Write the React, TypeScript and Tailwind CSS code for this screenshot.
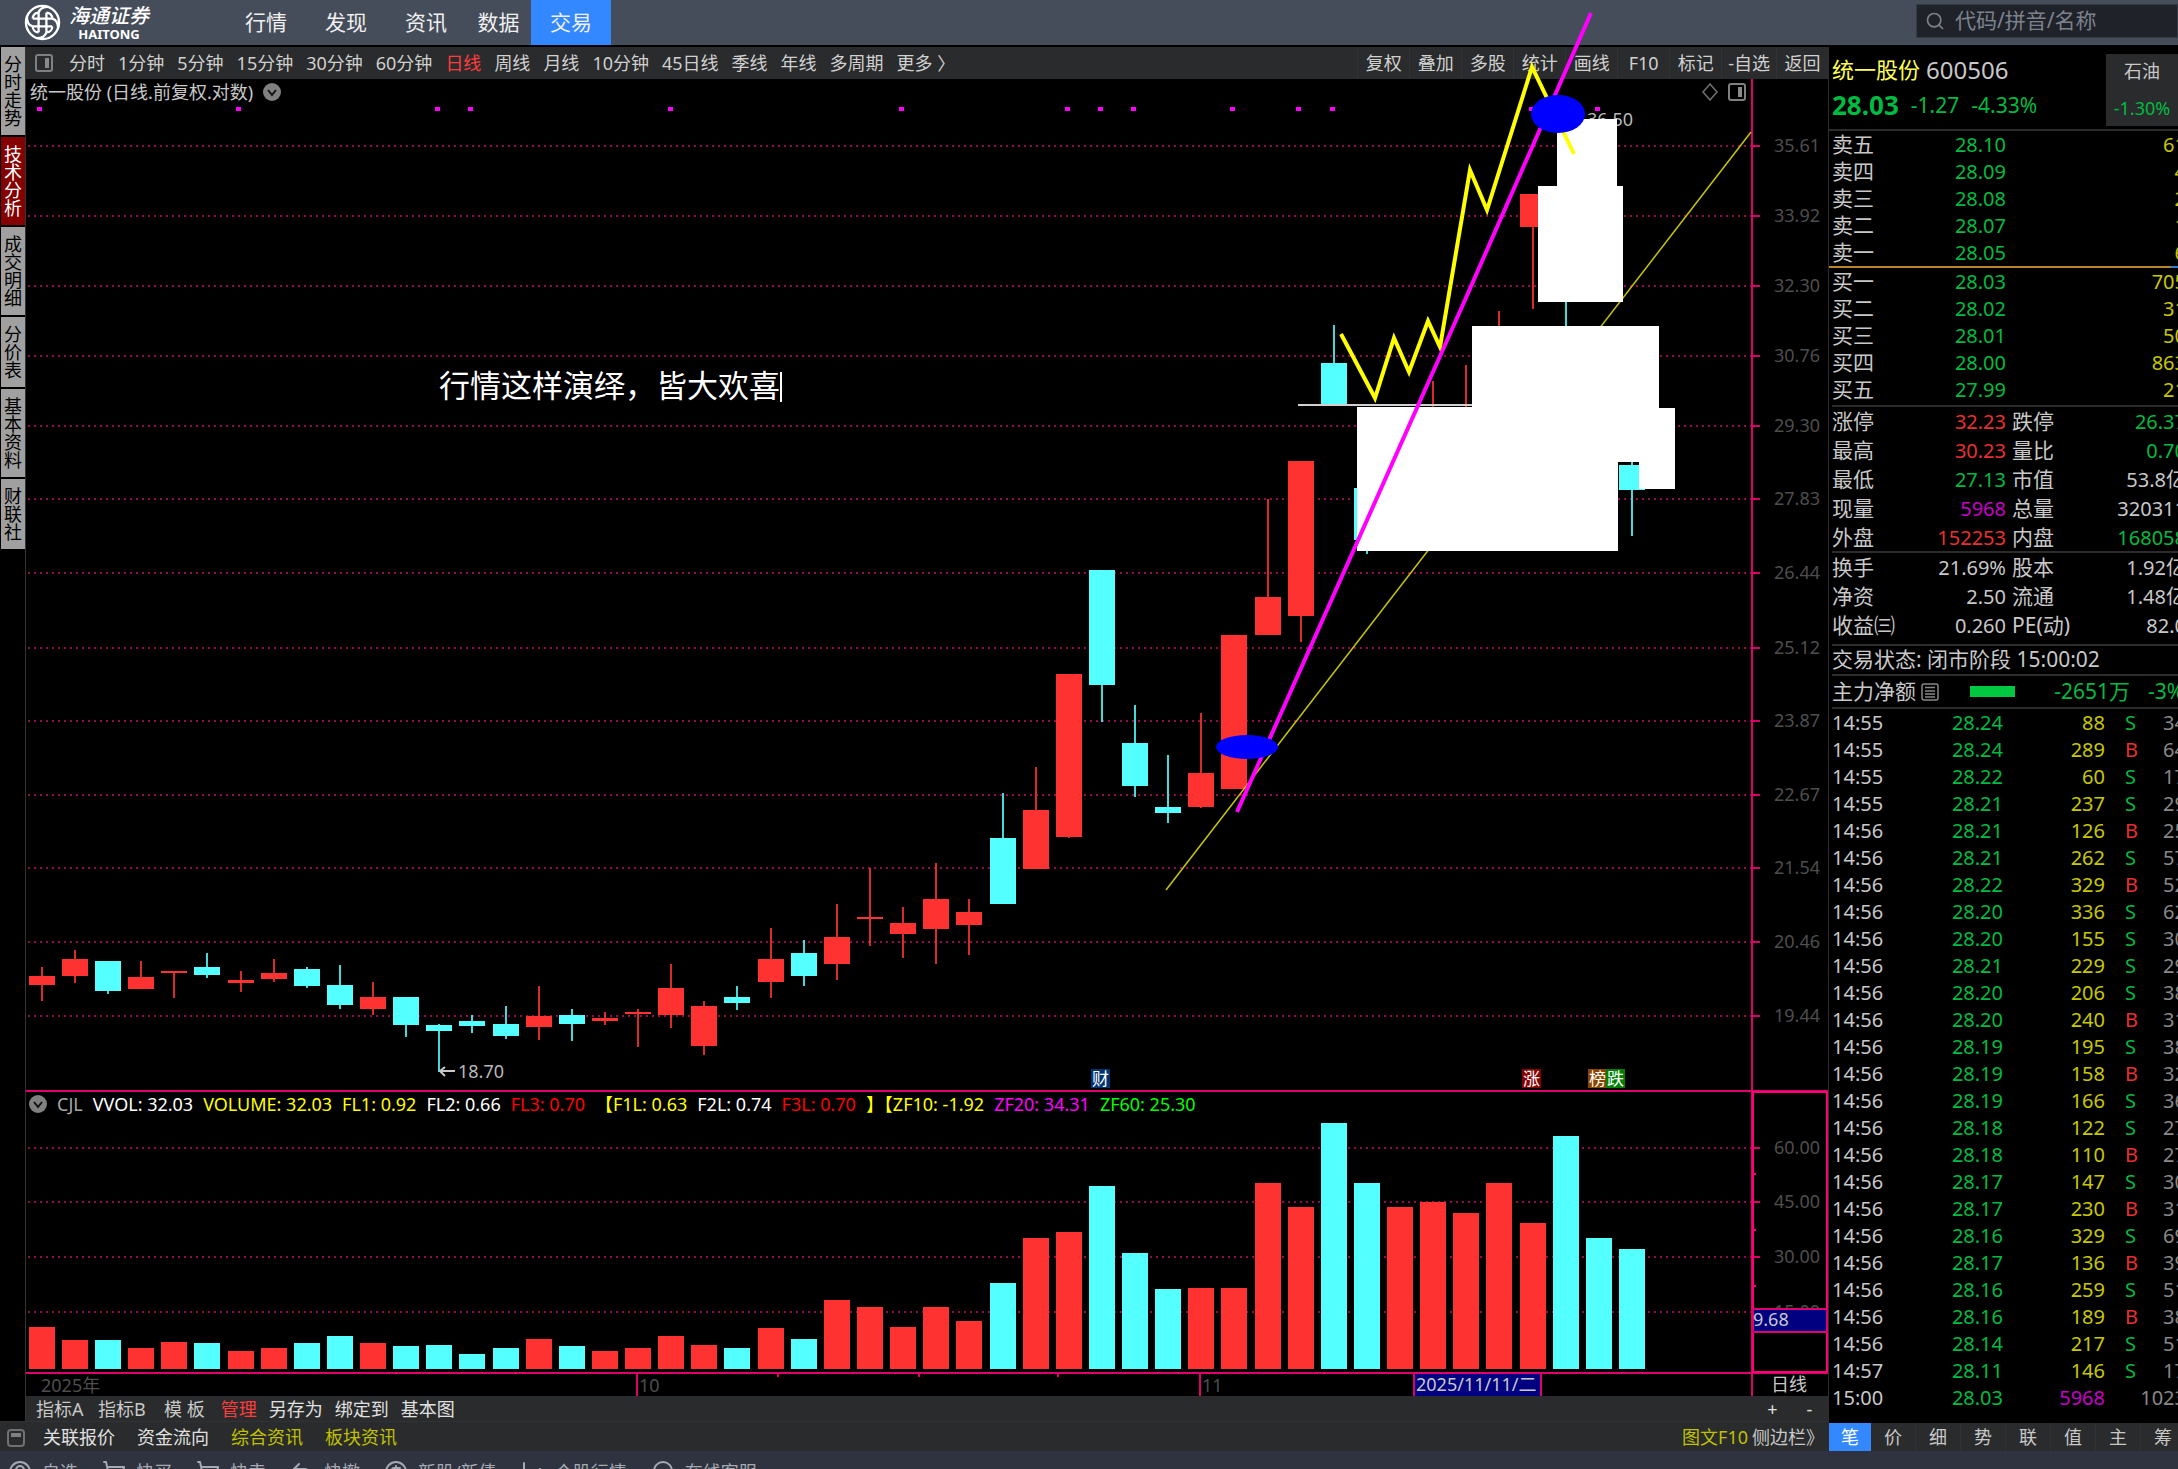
import React from "react";
import { Search, ShoppingCart, Undo2, ChartLine, Headset, CircleUserRound, CircleDollarSign } from "lucide-react";

// Daily candlestick terminal: toolbar + chart on the left, order book and ticks on the right.

type Candle = { up: boolean; high: number; top: number; bottom: number; low: number; vol: number };

const c = (dir: "r" | "c", high: number, top: number, bottom: number, low: number, vol: number): Candle => ({
  up: dir === "r", high, top, bottom, low, vol,
});

const CANDLES: Candle[] = [
  c("r", 967, 976, 985, 1001, 1327), c("r", 950, 959, 976, 983, 1340), c("c", 961, 961, 991, 994, 1340),
  c("r", 961, 977, 989, 989, 1348), c("r", 971, 971, 973, 998, 1342), c("c", 953, 967, 975, 978, 1343),
  c("r", 971, 980, 983, 992, 1351), c("r", 959, 973, 979, 982, 1348), c("c", 967, 969, 986, 988, 1343),
  c("c", 965, 985, 1005, 1009, 1336), c("r", 982, 997, 1009, 1015, 1343), c("c", 997, 997, 1025, 1037, 1346),
  c("c", 1024, 1025, 1031, 1072, 1345), c("c", 1015, 1021, 1026, 1033, 1354), c("c", 1006, 1024, 1036, 1039, 1348),
  c("r", 986, 1016, 1027, 1040, 1339), c("c", 1009, 1015, 1024, 1041, 1346), c("r", 1012, 1018, 1021, 1025, 1351),
  c("r", 1009, 1012, 1014, 1047, 1348), c("r", 964, 988, 1015, 1028, 1336), c("r", 1001, 1006, 1046, 1055, 1345),
  c("c", 986, 997, 1003, 1010, 1348), c("r", 928, 959, 982, 998, 1328), c("c", 940, 953, 976, 986, 1339),
  c("r", 904, 937, 964, 980, 1300), c("r", 868, 917, 919, 946, 1307), c("r", 907, 923, 934, 958, 1327),
  c("r", 863, 899, 929, 964, 1307), c("r", 899, 912, 925, 955, 1321), c("c", 793, 838, 904, 904, 1283),
  c("r", 767, 810, 869, 869, 1238), c("r", 674, 674, 837, 838, 1232), c("c", 570, 570, 685, 722, 1186),
  c("c", 705, 743, 786, 797, 1253), c("c", 755, 807, 813, 823, 1289), c("r", 713, 773, 807, 808, 1288),
  c("r", 635, 635, 789, 789, 1288), c("r", 499, 597, 635, 635, 1183), c("r", 461, 461, 616, 642, 1207),
  c("c", 325, 363, 405, 405, 1123), c("c", 488, 488, 540, 554, 1183), c("r", 420, 430, 500, 510, 1207),
  c("r", 381, 420, 480, 500, 1202), c("r", 365, 420, 480, 500, 1213), c("r", 311, 340, 400, 420, 1183),
  c("r", 194, 194, 227, 309, 1223), c("c", 195, 200, 300, 340, 1136), c("c", 340, 350, 400, 400, 1238),
  c("c", 460, 465, 490, 536, 1249),
];

const PRICES: [string, number][] = [
  ["35.61", 146], ["33.92", 216], ["32.30", 286], ["30.76", 356], ["29.30", 426], ["27.83", 499], ["26.44", 573],
  ["25.12", 648], ["23.87", 721], ["22.67", 795], ["21.54", 868], ["20.46", 942], ["19.44", 1016],
];
const VOLUMES: [string, number][] = [["60.00", 1148], ["45.00", 1202], ["30.00", 1257], ["15.00", 1312]];
const SIGNALS = [39, 238, 437, 470, 670, 901, 1067, 1100, 1133, 1232, 1298, 1332, 1531, 1597];

const BADGES = [
  { x: 1091, label: "财", fill: "#003370" },
  { x: 1522, label: "涨", fill: "#850000" },
  { x: 1588, label: "榜", fill: "#8a4500" },
  { x: 1606, label: "跌", fill: "#008000" },
];

const NAV = ["行情", "发现", "资讯", "数据", "交易"];
const SIDE = ["分时走势", "技术分析", "成交明细", "分价表", "基本资料", "财联社"];
const PERIODS = ["分时", "1分钟", "5分钟", "15分钟", "30分钟", "60分钟", "日线", "周线", "月线", "10分钟", "45日线", "季线", "年线", "多周期", "更多 〉"];
const TOOLS = ["复权", "叠加", "多股", "统计", "画线", "F10", "标记", "-自选", "返回"];

const LEGEND: [string, string][] = [
  ["CJL", "text-[#a8a8a8]"], ["VVOL: 32.03", "text-white"], ["VOLUME: 32.03", "text-[#ffff00]"],
  ["FL1: 0.92", "text-[#ffff00]"], ["FL2: 0.66", "text-white"], ["FL3: 0.70", "text-[#ff0000]"],
  ["【F1L: 0.63", "text-[#ffff00]"], ["F2L: 0.74", "text-white"], ["F3L: 0.70", "text-[#ff0000]"],
  ["】【ZF10: -1.92", "text-[#ffff00]"], ["ZF20: 34.31", "text-[#ff00ff]"], ["ZF60: 25.30", "text-[#00ff00]"],
];

const ASKS = [["卖五", "28.10", "61"], ["卖四", "28.09", "4"], ["卖三", "28.08", "2"], ["卖二", "28.07", "1"], ["卖一", "28.05", "6"]];
const BIDS = [["买一", "28.03", "705"], ["买二", "28.02", "31"], ["买三", "28.01", "50"], ["买四", "28.00", "863"], ["买五", "27.99", "21"]];

const RED = "text-[#e83030]";
const GREEN = "text-[#00bb42]";
const GRAY = "text-[#c8c8c8]";
const PURPLE = "text-[#c800c8]";

const STATS = [
  ["涨停", "32.23", RED, "跌停", "26.37", GREEN],
  ["最高", "30.23", RED, "量比", "0.70", GREEN],
  ["最低", "27.13", GREEN, "市值", "53.8亿", GRAY],
  ["现量", "5968", PURPLE, "总量", "320311", GRAY],
  ["外盘", "152253", RED, "内盘", "168058", GREEN],
];
const FUNDAMENTALS = [
  ["换手", "21.69%", GRAY, "股本", "1.92亿", GRAY],
  ["净资", "2.50", GRAY, "流通", "1.48亿", GRAY],
  ["收益㈢", "0.260", GRAY, "PE(动)", "82.0", GRAY],
];

const TICKS = `14:55 28.24 88 S 34
14:55 28.24 289 B 64
14:55 28.22 60 S 17
14:55 28.21 237 S 29
14:56 28.21 126 B 25
14:56 28.21 262 S 57
14:56 28.22 329 B 52
14:56 28.20 336 S 62
14:56 28.20 155 S 30
14:56 28.21 229 S 29
14:56 28.20 206 S 38
14:56 28.20 240 B 31
14:56 28.19 195 S 38
14:56 28.19 158 B 32
14:56 28.19 166 S 36
14:56 28.18 122 S 27
14:56 28.18 110 B 27
14:56 28.17 147 S 30
14:56 28.17 230 B 31
14:56 28.16 329 S 69
14:56 28.17 136 B 39
14:56 28.16 259 S 51
14:56 28.16 189 B 38
14:56 28.14 217 S 51
14:57 28.11 146 S 17
15:00 28.03 5968 - 1023`.split("\n").map((l) => l.split(" "));

const cx = (i: number) => Math.round(41.75 + i * 33.13);

function PanelIcon({ className }: { className?: string }) {
  return (
    <svg viewBox="0 0 18 18" className={`w-[18px] h-[18px] shrink-0 ${className ?? ""}`}>
      <rect x="1" y="1" width="16" height="16" rx="2" fill="none" stroke="#808080" strokeWidth="2" />
      <rect x="10" y="4" width="4" height="10" fill="#8a8a8a" />
    </svg>
  );
}

function Dropdown({ label }: { label: string }) {
  return (
    <button aria-label={label} className="shrink-0">
      <svg viewBox="0 0 18 18" className="w-[18px] h-[18px]">
        <circle cx="9" cy="9" r="9" fill="#808080" />
        <path d="M5 7l4 5 4-5" fill="none" stroke="#111" strokeWidth="2" />
      </svg>
    </button>
  );
}

function Header() {
  return (
    <header className="flex items-center h-[47px] shrink-0 bg-[#454c5a] border-b-2 border-black">
      <div className="flex items-center w-[226px] pl-6 gap-2 text-white">
        <svg viewBox="0 0 38 38" className="w-[37px] h-[37px]" fill="none" stroke="#fff">
          <circle cx="19" cy="19" r="17" strokeWidth="2.4" />
          <path d="M15 9v20M23 9v20M9 15h20M9 23h20" strokeWidth="2.4" />
          <path d="M15 9c1-4 5-6 10-6M29 15c4 1 6 5 6 10M23 29c-1 4-5 6-10 6M9 23c-4-1-6-5-6-10" strokeWidth="2.4" />
          <path d="M23 9c3 0 6 2 6 6M29 23c0 3-2 6-6 6M15 29c-3 0-6-2-6-6M9 15c0-3 2-6 6-6" strokeWidth="2.4" />
        </svg>
        <div className="flex flex-col items-center">
          <span className="text-[20px] leading-[22px] font-medium italic">海通证券</span>
          <span className="text-[13px] leading-[14px] font-bold">HAITONG</span>
        </div>
      </div>
      <nav className="flex h-full">
        {NAV.map((n) => (
          <button
            key={n}
            className={`h-full text-[21px] text-[#f0f0f0] ${n === "数据" ? "w-[65px]" : "w-20"} ${n === "交易" ? "bg-[#3388ff]" : ""}`}
          >
            {n}
          </button>
        ))}
      </nav>
      <label className="flex items-center gap-[10px] ml-auto w-[262px] h-[34px] -mt-1 pl-2 bg-[#1f2229] border border-[#363b46]">
        <Search className="w-5 h-5 shrink-0 text-[#7c828d]" strokeWidth={2} />
        <input
          aria-label="搜索" placeholder="代码/拼音/名称"
          className="min-w-0 flex-1 bg-transparent text-[21px] outline-none placeholder:text-[#7c828d]"
        />
      </label>
    </header>
  );
}

function Chart() {
  return (
    <div className="relative">
      <svg
        viewBox="26 79 1802 1317"
        className="relative z-10 block w-full h-auto overflow-visible pointer-events-none text-[18px]"
      >
        {/* grid and axis labels */}
        {[...PRICES, ...VOLUMES].map(([label, y]) => (
          <g key={label}>
            <line x1="28" x2="1752" y1={y} y2={y} stroke="#98084e" strokeWidth="2" strokeDasharray="2 4" shapeRendering="crispEdges" />
            <line x1="1752" x2="1760" y1={y} y2={y} stroke="#d80068" strokeWidth="2" />
            <text x="1820" y={y + 6} textAnchor="end" fill="#4e4e4e">{label}</text>
          </g>
        ))}
        {[1174, 1230, 1286].map((y) => <line key={y} x1="1752" x2="1756" y1={y} y2={y} stroke="#ff0078" strokeWidth="2" />)}
        {SIGNALS.map((x) => <rect key={x} x={x - 2} y="107" width="5" height="4" fill="#ff00ff" />)}

        {/* candles with their volume bars */}
        <g shapeRendering="crispEdges">
          {CANDLES.map((k, i) => (
            <g key={i} fill={k.up ? "#ff3232" : "#54ffff"}>
              <rect x={cx(i) - 1} y={k.high} width="2" height={k.low - k.high} opacity="0.85" />
              <rect x={cx(i) - 13} y={k.top} width="26" height={k.bottom - k.top} />
              <rect x={cx(i) - 13} y={k.vol} width="26" height={1369 - k.vol} />
            </g>
          ))}
        </g>

        <path d="M455 1071h-15m5-4l-5 4 5 5" fill="none" stroke="#c8c8c8" strokeWidth="2" />
        <text x="458" y="1078" fill="#b8b8b8">18.70</text>
        <text x="1633" y="126" textAnchor="end" fill="#b8b8b8">36.50</text>

        {BADGES.map((b) => (
          <g key={b.label}>
            <rect x={b.x} y="1069" width="19" height="19" fill={b.fill} />
            <text x={b.x + 1} y="1085" fill="#fff" className="text-[17px]">{b.label}</text>
          </g>
        ))}

        {/* frames */}
        <g stroke="#e0006c" strokeWidth="2" fill="none">
          <path d="M1752 79V1396M26 1091H1828M26 1373H1828M637 1373v23M1200 1373v23M778 1373v4M919 1373v4M1058 1373v4" />
          <rect x="1753" y="1092" width="74" height="280" stroke="#ff0078" />
          <rect x="1753" y="1309" width="74" height="23" fill="#000080" />
        </g>
        <text x="1753" y="1326" fill="#c8c8c8">9.68</text>
        <rect x="1415" y="1374" width="125" height="22" fill="#000080" />
        <path d="M1414 1374v22M1541 1374v22" stroke="#e0006c" strokeWidth="2" />
        <text x="1416" y="1391" fill="#c8c8c8">2025/11/11/二</text>
        <g fill="#4e4e4e">
          <text x="41" y="1392">2025年</text>
          <text x="639" y="1392">10</text>
          <text x="1202" y="1392">11</text>
        </g>
        <text x="1771" y="1391" fill="#c8c8c8">日线</text>

        {/* hand-drawn layer */}
        <path d="M1166 890L1751 132" stroke="#c8c800" strokeWidth="1.5" />
        <path d="M1298 405H1472" stroke="#d0d0d0" strokeWidth="2" />
        <path
          fill="#fff"
          d="M1557 119H1617V186H1623V302H1538V186H1557ZM1472 326H1659V408H1675V489H1639V462H1618V551H1357V407H1472Z"
        />
        <path
          d="M1341 334L1375 398 1394 338 1409 372 1428 321 1440 347 1470 170 1487 210 1532 67 1574 154"
          fill="none" stroke="#ffff00" strokeWidth="4"
        />
        <path d="M1237 812L1465 300 1591 13" fill="none" stroke="#ff00ff" strokeWidth="4" />
        <ellipse cx="1558" cy="114" rx="27" ry="19" fill="#0000ff" />
        <ellipse cx="1247" cy="747" rx="31" ry="12" fill="#0000ff" />
        <text x="439" y="397" fill="#fff" className="text-[31px]">行情这样演绎，皆大欢喜</text>
        <path d="M781 372V402" stroke="#fff" strokeWidth="2" />
      </svg>

      <div className="absolute left-0 right-0 top-0 flex items-center h-[26px] pl-1 pr-[82px] text-[18px] text-[#c8c8c8]">
        <span>统一股份 (日线.前复权.对数)</span>
        <span className="ml-[10px] flex"><Dropdown label="指标菜单" /></span>
        <svg viewBox="0 0 16 18" className="w-4 h-[18px] ml-auto" fill="none" stroke="#707070" strokeWidth="1.5">
          <path d="M8 1l7 8-7 8-7-8z" />
        </svg>
        <PanelIcon className="ml-[10px]" />
      </div>
      <div className="absolute left-0 top-[77%] flex items-center gap-[10px] h-[22px] pl-[3px] text-[18px] whitespace-nowrap">
        <Dropdown label="副图菜单" />
        {LEGEND.map(([text, color]) => <span key={text} className={color}>{text}</span>)}
      </div>
    </div>
  );
}

function Toolbar() {
  return (
    <div className="flex items-center h-8 pl-[9px] bg-[#292b2c] text-[18px] text-[#d0d0d0] whitespace-nowrap">
      <PanelIcon />
      <div className="flex gap-[13px] ml-4">
        {PERIODS.map((p) => (
          <button key={p} className={p === "日线" ? "text-[#ff3c3c]" : ""}>{p}</button>
        ))}
      </div>
      <div className="flex h-full ml-auto">
        {TOOLS.map((t) => (
          <button key={t} className="min-w-[52px] px-[6px] border-l border-[#303233]">{t}</button>
        ))}
      </div>
    </div>
  );
}

function IndicatorBar() {
  return (
    <div className="flex items-center h-[25px] pt-[2px] pl-[10px] gap-3 bg-[#292b2c] text-[18px] text-[#e0e0e0] whitespace-nowrap">
      <button className="w-[50px] text-left text-[#c8c8c8]">指标A</button>
      <button className="w-[50px] text-left text-[#c8c8c8]">指标B</button>
      <button className="px-1 text-[#c8c8c8]">模 板</button>
      <button className="text-[#ff3c3c]">管理</button>
      <button>另存为</button>
      <button>绑定到</button>
      <button>基本图</button>
      <div className="flex ml-auto">
        <button className="w-[37px]">+</button>
        <button className="w-[37px]">-</button>
      </div>
    </div>
  );
}

function InfoBar() {
  return (
    <div className="flex items-center h-[30px] pt-[2px] pl-[7px] pr-1 gap-[22px] bg-[#292b2c] border-t border-[#303233] text-[18px] text-[#e0e0e0] whitespace-nowrap">
      <svg viewBox="0 0 18 18" className="w-[18px] h-[18px] -mr-1">
        <rect x="1" y="1" width="16" height="16" rx="3" fill="none" stroke="#707070" strokeWidth="2" />
        <rect x="4" y="4" width="10" height="4" fill="#808080" />
      </svg>
      <button>关联报价</button>
      <button>资金流向</button>
      <button className="text-[#c0c000]">综合资讯</button>
      <button className="text-[#c0c000]">板块资讯</button>
      <div className="flex gap-1 ml-auto">
        <button className="text-[#c0c000]">图文F10</button>
        <button className="text-[#c8c8c8]">侧边栏》</button>
      </div>
    </div>
  );
}

function Book({ rows }: { rows: string[][] }) {
  return (
    <div>
      {rows.map(([name, price, qty]) => (
        <div key={name} className="flex items-center h-[27px]">
          <span className="w-[74px] text-[21px]">{name}</span>
          <span className={`w-[100px] text-right ${GREEN}`}>{price}</span>
          <span className="flex-1 text-right text-[#c8c800]">{qty}</span>
        </div>
      ))}
    </div>
  );
}

function Stats({ rows }: { rows: string[][] }) {
  return (
    <div>
      {rows.map(([a, av, ac, b, bv, bc]) => (
        <div key={a} className="flex items-center h-[29px]">
          <span className="w-[74px] text-[21px]">{a}</span>
          <span className={`w-[100px] text-right ${ac}`}>{av}</span>
          <span className="w-[72px] pl-[6px] text-[21px]">{b}</span>
          <span className={`flex-1 text-right ${bc}`}>{bv}</span>
        </div>
      ))}
    </div>
  );
}

function QuotePanel() {
  return (
    <aside className="flex flex-col w-[350px] shrink-0 overflow-hidden border-l border-[#2c2c2c] text-[20px] leading-[27px] text-[#c8c8c8] whitespace-nowrap">
      <div className="flex h-[84px] border-b-2 border-[#2c2c2c] pl-[3px]">
        <div className="flex-1 pt-2">
          <div className="flex items-center gap-[6px] h-7">
            <span className="text-[22px] text-[#ffff55]">统一股份</span>
            <span className="text-[24px]">600506</span>
          </div>
          <div className={`flex items-center gap-3 h-11 text-[21px] ${GREEN}`}>
            <b className="text-[26px]">28.03</b>
            <span>-1.27</span>
            <span>-4.33%</span>
          </div>
        </div>
        <div className="flex flex-col items-center w-[72px] h-[72px] mt-[7px] pt-1 gap-[10px] bg-[#292b2c] text-[18px]">
          <span>石油</span>
          <span className={GREEN}>-1.30%</span>
        </div>
      </div>

      {/* wider than the panel, the last column runs off the edge */}
      <div className="w-[357px] pl-[3px]">
        <Book rows={ASKS} />
        <div className="flex h-[2px] -ml-[3px]">
          <div className="w-[342px] bg-[#b8862b]" />
          <div className="flex-1 bg-[#2b80c8]" />
        </div>
        <div className="h-[137px]"><Book rows={BIDS} /></div>
        <div className="h-[146px] border-t-2 border-[#2c2c2c]"><Stats rows={STATS} /></div>
        <div className="h-[93px] border-t-2 border-[#2c2c2c]"><Stats rows={FUNDAMENTALS} /></div>
        <div className="h-[30px] border-t-2 border-[#2c2c2c] text-[21px]">交易状态: 闭市阶段 15:00:02</div>
        <div className="flex items-center h-[35px] border-y-2 border-[#2c2c2c]">
          <span className="w-[89px] text-[21px]">主力净额</span>
          <svg viewBox="0 0 18 18" className="w-[18px] h-[18px]" fill="none" stroke="#888">
            <rect x="1" y="1" width="16" height="16" rx="2" strokeWidth="1.5" />
            <path d="M4 4.500h10M4 8h10M4 11h10M4 14h10" strokeWidth="1.5" />
          </svg>
          <span className="w-[45px] h-[11px] ml-[31px] bg-[#00c840]" />
          <span className={`w-[115px] text-right text-[21px] ${GREEN}`}>-2651万</span>
          <span className={`ml-[18px] text-[21px] ${GREEN}`}>-3%</span>
        </div>
        <table className="w-full table-fixed">
          <colgroup>
            <col className="w-[69px]" />
            <col className="w-[102px]" />
            <col className="w-[102px]" />
            <col className="w-[32px]" />
            <col />
          </colgroup>
          <tbody>
            {TICKS.map(([time, price, vol, side, n], i) => (
              <tr key={i} className="h-[27px]">
                <td>{time}</td>
                <td className={`text-right ${GREEN}`}>{price}</td>
                <td className={`text-right ${side === "-" ? PURPLE : "text-[#c8c800]"}`}>{vol}</td>
                <td className={`pl-5 ${side === "B" ? RED : GREEN}`}>{side === "-" ? "" : side}</td>
                <td className="text-right text-[#888]">{n}</td>
              </tr>
            ))}
          </tbody>
        </table>
      </div>

      <div className="flex h-7 mt-auto w-[357px] bg-[#292b2c] text-[18px]">
        <button className="w-[42px] bg-[#3388ff] text-white">笔</button>
        {["价", "细", "势", "联", "值", "主", "筹"].map((t) => (
          <button key={t} className="w-[45px] border-r border-[#303233]">{t}</button>
        ))}
      </div>
    </aside>
  );
}

const FOOTER = [
  { label: "自选", Icon: CircleUserRound },
  { label: "快买", Icon: ShoppingCart },
  { label: "快卖", Icon: ShoppingCart },
  { label: "快撤", Icon: Undo2 },
  { label: "新股/新债", Icon: CircleDollarSign },
  { label: "个股行情", Icon: ChartLine },
  { label: "在线客服", Icon: Headset },
];

export default function App() {
  return (
    <div className="flex flex-col h-screen overflow-hidden bg-black font-['Noto_Sans','Noto_Sans_CJK_SC',sans-serif]">
      <Header />
      <div className="flex flex-1 min-h-0">
        <div className="flex flex-col flex-1 min-w-0">
          <div className="flex flex-1 min-h-0">
            <nav className="flex flex-col gap-[2px] w-[26px] shrink-0 pl-px border-r border-[#333]">
              {SIDE.map((s) => (
                <button
                  key={s}
                  className={`flex justify-center py-2 text-[18px] leading-[18px] ${s === "技术分析" ? "bg-[#850000] text-white" : "bg-[#a0a0a0] text-black"}`}
                >
                  <span className="w-[18px] break-all">{s}</span>
                </button>
              ))}
            </nav>
            <div className="flex flex-col flex-1 min-w-0">
              <Toolbar />
              <Chart />
              <IndicatorBar />
            </div>
          </div>
          <InfoBar />
        </div>
        <QuotePanel />
      </div>
      <footer className="h-[18px] shrink-0 overflow-hidden bg-[#2e333f]">
        <div className="flex gap-6 pl-2 pt-2 text-[18px] leading-[26px] text-[#a4a9b2] whitespace-nowrap">
          {FOOTER.map(({ label, Icon }) => (
            <button key={label} className="flex items-center gap-[10px]">
              <Icon className="w-6 h-6" strokeWidth={2} /> {label}
            </button>
          ))}
        </div>
      </footer>
    </div>
  );
}
